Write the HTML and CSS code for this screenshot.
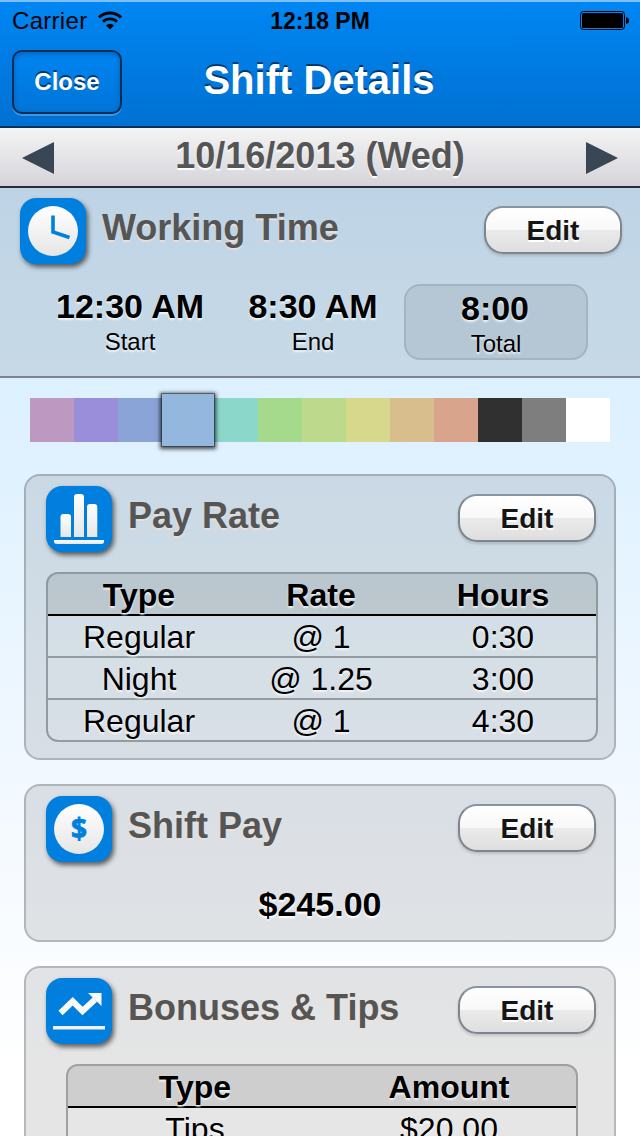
FILE: index.html
```html
<!DOCTYPE html>
<html lang="en">
<head>
    <meta charset="UTF-8">
    <meta name="viewport" content="width=device-width, initial-scale=1.0">
    <title>Shift Details</title>
    <link rel="stylesheet" href="styles.css">
</head>
<body>
    <div class="header">
        <div class="status">
            <div class="carrier">
                <span>Carrier</span>
                <svg width="26" height="20" viewBox="0 0 26 20">
                    <path d="M2 7.500 A15.500 15.500 0 0 1 24 7.500" fill="none" stroke="#000" stroke-width="3"/>
                    <path d="M6 11.800 A10 10 0 0 1 20 11.800" fill="none" stroke="#000" stroke-width="2.800"/>
                    <path d="M13 19.500 L9 15.400 A5.700 5.700 0 0 1 17 15.400 Z"/>
                </svg>
            </div>
            <div class="clock">12:18 PM</div>
            <div class="battery">
                <svg width="50" height="20" viewBox="0 0 50 20">
                    <rect x="0.5" y="0.5" width="44" height="18" rx="3" fill="none" stroke="#000"/>
                    <rect x="2" y="2" width="41" height="15" rx="1.5"/>
                    <path d="M46 6 Q49 6.5 49 9.5 Q49 12.500 46 13 Z"/>
                </svg>
            </div>
        </div>
        <div class="navbar">
            <a class="close">Close</a>
            <h1>Shift Details</h1>
        </div>
    </div>

    <div class="datebar">
        <svg width="32" height="32" viewBox="0 0 32 32"><path d="M0 16 L32 0 V32 Z" fill="#394653"/></svg>
        <h2>10/16/2013 (Wed)</h2>
        <svg width="32" height="32" viewBox="0 0 32 32"><path d="M32 16 L0 0 V32 Z" fill="#394653"/></svg>
    </div>

    <div class="working">
        <div class="title">
            <svg class="icon" width="66" height="66" viewBox="0 0 66 66">
                <defs>
                    <linearGradient id="shine" x1="0" y1="0" x2="0" y2="1">
                        <stop offset="0" stop-color="#fff"/>
                        <stop offset="1" stop-color="#e6e6e6"/>
                    </linearGradient>
                </defs>
                <circle cx="33" cy="33" r="25" fill="url(#shine)"/>
                <path d="M33 17.500 V34 L49.500 39.500" fill="none" stroke="#007fde" stroke-width="3.6"/>
            </svg>
            <h3>Working Time</h3>
            <a class="edit">Edit</a>
        </div>
        <div class="times">
            <div class="time"><b>12:30 AM</b><span>Start</span></div>
            <div class="time"><b>8:30 AM</b><span>End</span></div>
            <div class="time total"><b>8:00</b><span>Total</span></div>
        </div>
    </div>

    <div class="colors">
        <i class="pink"></i>
        <i class="purple"></i>
        <i class="indigo"></i>
        <i class="blue selected"></i>
        <i class="teal"></i>
        <i class="green"></i>
        <i class="lime"></i>
        <i class="yellow"></i>
        <i class="orange"></i>
        <i class="red"></i>
        <i class="black"></i>
        <i class="gray"></i>
        <i class="white"></i>
    </div>

    <div class="card">
        <div class="title">
            <svg class="icon" width="66" height="66" viewBox="0 0 66 66">
                <path d="M14.500 51 V31 Q14.500 28 17.500 28 H22 Q25 28 25 31 V51 Z" fill="url(#shine)"/>
                <path d="M28 51 V11 Q28 8 31 8 H35 Q38 8 38 11 V51 Z" fill="url(#shine)"/>
                <path d="M41 51 V21 Q41 18 44 18 H48.300 Q51.300 18 51.300 21 V51 Z" fill="url(#shine)"/>
                <path d="M8 54 H58 V55.500 Q58 58 55 58 H11 Q8 58 8 55.500 Z" fill="url(#shine)"/>
            </svg>
            <h3>Pay Rate</h3>
            <a class="edit">Edit</a>
        </div>
        <div class="table rates">
            <div class="row head"><span>Type</span><span>Rate</span><span>Hours</span></div>
            <div class="row"><span>Regular</span><span>@ 1</span><span>0:30</span></div>
            <div class="row"><span>Night</span><span>@ 1.25</span><span>3:00</span></div>
            <div class="row"><span>Regular</span><span>@ 1</span><span>4:30</span></div>
        </div>
    </div>

    <div class="card pay">
        <div class="title">
            <svg class="icon" width="66" height="66" viewBox="0 0 66 66">
                <circle cx="33" cy="33" r="25" fill="url(#shine)"/>
                <text class="dollar" x="33" y="43" text-anchor="middle">$</text>
            </svg>
            <h3>Shift Pay</h3>
            <a class="edit">Edit</a>
        </div>
        <p class="amount">$245.00</p>
    </div>

    <div class="card">
        <div class="title">
            <svg class="icon" width="66" height="66" viewBox="0 0 66 66">
                <path d="M14.500 35 L26.700 23.300 L36.500 33 L49 21.500" fill="none" stroke="#fafafa" stroke-width="6"/>
                <path d="M42 15 H55.500 V28 Z" fill="#fafafa"/>
                <rect x="7" y="48" width="52" height="3.500" fill="#f0f0f0"/>
            </svg>
            <h3>Bonuses &amp; Tips</h3>
            <a class="edit">Edit</a>
        </div>
        <div class="table narrow">
            <div class="row head"><span>Type</span><span>Amount</span></div>
            <div class="row"><span>Tips</span><span>$20.00</span></div>
        </div>
    </div>
</body>
</html>
```
FILE: styles.css
```css
* {
    box-sizing: border-box;
}
body {
    margin: 0;
    height: 1136px;
    overflow: hidden;
    font-family: "Liberation Sans", Helvetica, Arial, sans-serif;
    color: #000;
    background: linear-gradient(#d8edff 180px, #e0f2ff 470px, #f1f8ff 760px, #fff 1070px);
}
h1, h2, h3, p {
    margin: 0;
}
svg {
    display: block;
    flex: none;
}

/* header */
.header {
    height: 128px;
    border-top: 2px solid #80c0f8;
    border-bottom: 2px solid #00315c;
    background: linear-gradient(#0086f3, #0071d2);
}
.status {
    display: grid;
    grid-template-columns: 1fr auto 1fr;
    height: 38px;
    padding: 0 10px 0 12px;
    align-items: center;
    font-size: 24px;
}
.carrier {
    display: flex;
    align-items: center;
    gap: 10px;
    letter-spacing: 0.3px;
}
.carrier svg {
    margin-top: -3px;
}
.clock {
    margin-left: -2px;
    font-size: 23px;
    font-weight: bold;
}
.battery {
    justify-self: end;
}
.navbar {
    display: grid;
    grid-template-columns: 110px 1fr 110px;
    padding: 10px 12px 0;
}
.close {
    height: 64px;
    border: 2px solid #022c50;
    border-radius: 10px;
    background: linear-gradient(#0084f0, #0075d9);
    box-shadow: inset 0 2px 5px rgba(0, 60, 130, 0.45), 0 2px 0 rgba(90, 175, 250, 0.6);
    color: #fff;
    font-size: 24px;
    font-weight: bold;
    line-height: 60px;
    text-align: center;
    text-shadow: 0 -2px 0 rgba(0, 35, 70, 0.75);
}
h1 {
    margin-left: -2px;
    color: #fff;
    font-size: 40px;
    line-height: 60px;
    text-align: center;
    text-shadow: 0 -2px 0 rgba(0, 35, 70, 0.75);
}

/* date */
.datebar {
    display: flex;
    justify-content: space-between;
    align-items: center;
    height: 60px;
    padding: 2px 22px 0;
    border-bottom: 2px solid #2d2d35;
    background: linear-gradient(#f4f4f4, #d5d4da);
}
h2 {
    color: #555;
    font-size: 36px;
    line-height: 58px;
    margin-top: -4px;
    text-shadow: 0 2px 1px #fff;
}

/* section title */
.title {
    display: flex;
    align-items: flex-start;
}
.icon {
    border-radius: 16px;
    background: #007fde;
    box-shadow: 2px 3px 5px rgba(0, 0, 0, 0.6);
}
h3 {
    flex: 1;
    margin-left: 16px;
    color: #555;
    font-size: 36px;
    line-height: 60px;
    text-shadow: 0 2px 1px rgba(240, 225, 215, 0.8);
}
.edit {
    width: 138px;
    height: 48px;
    margin-top: 8px;
    border: 2px solid #7d868c;
    border-top-color: #8795a2;
    border-radius: 19px;
    background: linear-gradient(#fff, #f8f8f8 50%, #ebebeb 50%, #dedede);
    box-shadow: 0 2px 3px rgba(0, 0, 0, 0.15);
    color: #151515;
    font-size: 28px;
    font-weight: bold;
    line-height: 45px;
    text-align: center;
    text-shadow: 0 2px 0 #fff;
}

/* working time */
.working {
    height: 190px;
    padding: 10px 18px 0 20px;
    border-bottom: 2px solid #7c868e;
    background: linear-gradient(#bed4e6, #c7d9e6);
}
.times {
    display: grid;
    grid-template-columns: 184px 182px 184px;
    margin: 20px 0 0 18px;
}
.time {
    display: flex;
    flex-direction: column;
    height: 76px;
    padding-top: 3px;
    text-align: center;
    font-size: 24px;
    line-height: 32px;
    text-shadow: 0 2px 2px rgba(255, 255, 255, 0.75);
}
.time b {
    font-size: 34px;
    line-height: 39px;
}
.total {
    border: 2px solid #a4b4c1;
    border-radius: 16px;
    background: #b5c7d5;
}
.total b {
    margin-left: -2px;
}

/* color picker */
.colors {
    display: flex;
    align-items: center;
    height: 96px;
    margin-top: -6px;
    padding: 0 30px;
}
.colors i {
    width: 44px;
    height: 44px;
}
.colors .selected {
    position: relative;
    width: 52px;
    height: 52px;
    box-shadow: 0 0 0 1px rgba(30, 50, 60, 0.5), 0 1px 4px 2px rgba(0, 0, 0, 0.7);
}
.pink { background: #bd99c2; }
.purple { background: #9a8dda; }
.indigo { background: #8ba4d8; }
.blue { background: #94b7de; }
.teal { background: #8bd8ca; }
.green { background: #a5d98c; }
.lime { background: #bdd98c; }
.yellow { background: #d8d88c; }
.orange { background: #d8be8c; }
.red { background: #d8a48c; }
.black { background: #303030; }
.gray { background: #7e7e7e; }
.white { background: #fff; }

/* cards */
.card {
    margin: 0 24px 24px;
    padding: 10px 16px 16px 20px;
    border: 2px solid rgba(0, 0, 0, 0.28);
    border-radius: 16px;
    background: rgba(0, 0, 0, 0.1);
    background-clip: padding-box;
}
.colors + .card {
    margin-top: 6px;
}
.card .edit {
    margin-right: 2px;
}
.card.pay {
    height: 158px;
}
.amount {
    margin: 22px 0 0 -4px;
    font-size: 34px;
    font-weight: bold;
    line-height: 40px;
    text-align: center;
    text-shadow: 0 2px 2px #fff;
}
.dollar {
    fill: #007fde;
    stroke: #007fde;
    stroke-width: 0.8px;
    font: bold 28px "Open Sans", sans-serif;
}

/* tables */
.table {
    margin-top: 20px;
    border: 2px solid rgba(0, 0, 0, 0.3);
    border-radius: 12px;
    background: rgba(255, 255, 255, 0.06);
    background-clip: padding-box;
    overflow: hidden;
    font-size: 32px;
    line-height: 42px;
    text-align: center;
    text-shadow: 0 2px 2px rgba(255, 255, 255, 0.75);
}
.row {
    display: grid;
    grid-template-columns: 1fr 1fr;
    height: 42px;
    border-bottom: 2px solid rgba(0, 0, 0, 0.3);
}
.rates .row {
    grid-template-columns: 182px 182px 182px;
}
.row:last-child {
    height: 40px;
    border-bottom: 0;
}
.head {
    border-bottom-color: #000;
    background: rgba(0, 0, 0, 0.1);
    font-weight: bold;
}
.narrow {
    margin: 20px 20px 0;
}
```
